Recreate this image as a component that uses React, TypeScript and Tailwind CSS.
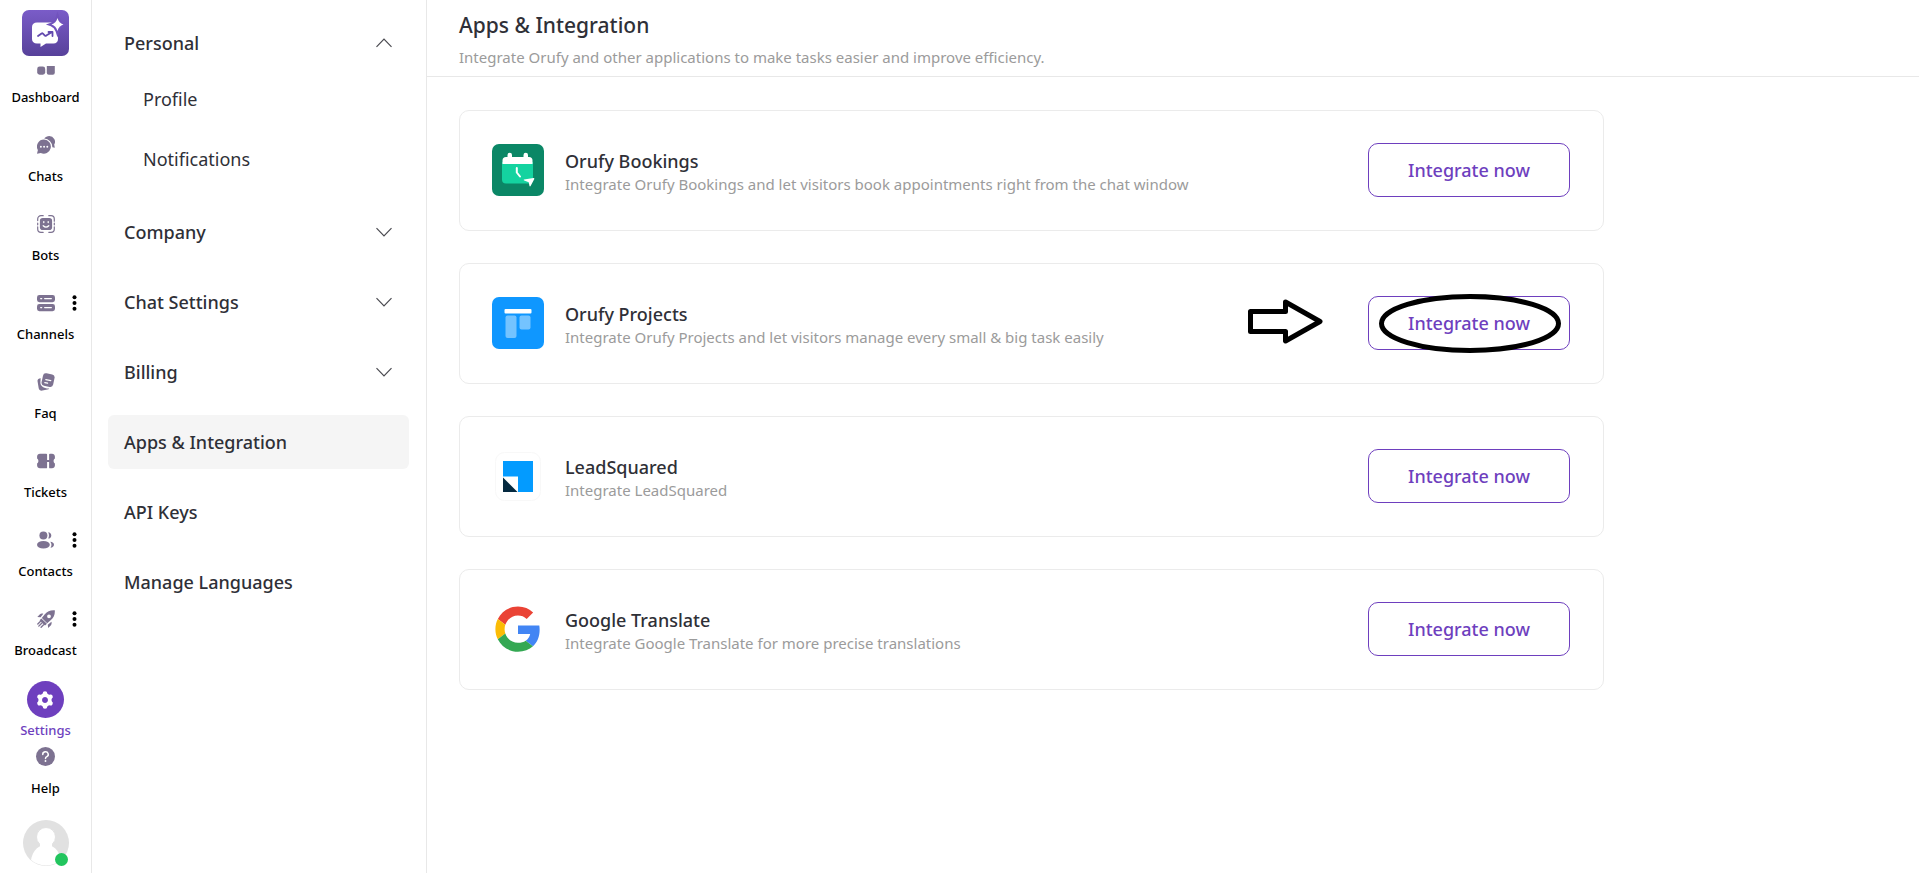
import type { ReactNode } from "react";

const RAIL = "#7d7291";

function Glyph({ children }: { children: ReactNode }) {
  return (
    <svg viewBox="0 0 18 18" className="size-[18px] shrink-0" fill={RAIL} aria-hidden="true">
      {children}
    </svg>
  );
}

const DashboardIcon = () => (
  <Glyph>
    <rect x="0.2" y="0" width="8" height="6.5" rx="2" />
    <rect x="9.8" y="0" width="8" height="6" rx="2" />
    <rect x="0.2" y="9.6" width="8" height="8.1" rx="2.4" />
    <rect x="9.8" y="7.5" width="8" height="10.2" rx="2" />
  </Glyph>
);

const ChatsIcon = () => (
  <Glyph>
    <path d="M7.2 2.6C8.4.9 10.3 0 12.3 0a5.7 5.7 0 0 1 4.9 8.6l.6 3.1-2.4-.4A8.7 8.7 0 0 0 7.2 2.6z" />
    <path
      fillRule="evenodd"
      d="M7 3.6a7 7 0 1 1-3.2 13.3L0 17.8l.9-3.7A7 7 0 0 1 7 3.6zM3.9 9.8a.95.95 0 1 0 0 1.9.95.95 0 0 0 0-1.9zm3.2 0a.95.95 0 1 0 0 1.9.95.95 0 0 0 0-1.9zm3.2 0a.95.95 0 1 0 0 1.9.95.95 0 0 0 0-1.9z"
    />
  </Glyph>
);

const BotsIcon = () => (
  <Glyph>
    <g fill="none" stroke={RAIL} strokeWidth="1.2" strokeLinecap="round">
      <path d="M.7 5.6V4A3.3 3.3 0 0 1 4 .7h2.200M11.800.7H14A3.3 3.3 0 0 1 17.300 4v2.200M17.300 11.800V14a3.3 3.3 0 0 1-3.3 3.300h-2.200M6.200 17.300H4A3.3 3.3 0 0 1 .7 14v-2.200" />
      <path d="M.7 8.200v1.600M17.300 8.200v1.600" />
    </g>
    <rect x="2.900" y="2.900" width="12.200" height="12.200" rx="2.800" />
    <g fill="none" stroke="#fff" strokeWidth="1.3" strokeLinecap="round">
      <path d="M6.8 6.600v1M11.200 6.600v1M6.200 10.800c1.600 1.500 4 1.500 5.600 0" />
    </g>
  </Glyph>
);

const ChannelsIcon = () => (
  <Glyph>
    <rect x="0" y="1" width="18" height="7.2" rx="2.4" />
    <rect x="0" y="10" width="18" height="7.2" rx="2.4" />
    <g stroke="#fff" strokeWidth="1.1" strokeLinecap="round">
      <path d="M3.6 4.6h1.2M7.6 4.6h6.8M3.6 13.6h1.2M7.6 13.6h6.8" />
    </g>
  </Glyph>
);

const FaqIcon = () => (
  <Glyph>
    <path d="M3.7 5.2C2 5.4.2 6.200.5 8l1.200 7.200C2 17 3.600 18 5.400 17.600l5-1.100c.9-.2 1.500-.6 1.900-1.100-5.300.2-9.200-2.400-8.900-6.500z" />
    <rect x="5.200" y="0.800" width="11.800" height="12.600" rx="3" transform="rotate(12 11 7)" />
    <path d="M8.800 6.600l5 1M7.800 9.700l2.800.5" stroke="#fff" strokeWidth="1.200" strokeLinecap="round" />
  </Glyph>
);

const TicketsIcon = () => (
  <Glyph>
    <path d="M3 1.700h6.200c.5 0 .9.400.9.900v12.800c0 .5-.4.900-.9.900H3c-1.700 0-2.900-1.200-2.900-2.800v-1.900c.8-.6 1.300-1.500 1.300-2.600S.900 7 .1 6.400V4.500C.1 2.900 1.300 1.700 3 1.700z" />
    <path d="M13 1.700h2c1.700 0 2.900 1.200 2.900 2.800v1.900c-.8.600-1.300 1.500-1.300 2.600s.5 2 1.300 2.600v1.900c0 1.600-1.200 2.800-2.900 2.800h-2c-.5 0-.9-.4-.9-.9V2.600c0-.5.4-.9.900-.9z" />
    <rect x="9" y="8" width="4" height="2" />
  </Glyph>
);

const ContactsIcon = () => (
  <Glyph>
    <circle cx="6.400" cy="4.400" r="4" />
    <ellipse cx="6.400" cy="13.800" rx="6.400" ry="3.800" />
    <path d="M11.200 1.200c1.800.1 3.100 1.400 3.100 3.200s-1.300 3.200-3.100 3.200c1-2 1-4.400 0-6.400z" />
    <path d="M13.300 10.800c2.300.2 3.700 1.300 3.700 2.900s-1.400 2.700-3.500 3c1.400-1.800 1.300-4.200-.2-5.900z" />
  </Glyph>
);

const BroadcastIcon = () => (
  <Glyph>
    <path
      fillRule="evenodd"
      d="M17.800.3c.3 4.400-.9 7.200-3.900 9.800l-3.700 3.200-5.400-5.200 3-3.800C10.400 1.300 13.400 0 17.800.3zM12 4.400a1.900 1.900 0 1 0 0 3.800 1.900 1.900 0 0 0 0-3.800z"
    />
    <path d="M6.300 3.700 3.600 7.200.3 6.900l2.400-2.500c.9-.9 2.200-1.200 3.600-.7zM14.400 11.800l-3.600 2.900.3 3.200 2.600-2.400c.9-.9 1.200-2.200.7-3.700z" />
    <path d="M4.400 9.400 9 13.800l-1 .9-4.500-4.400zM3.300 11.500.8 14M4.900 13l-3.100 3.100M6.600 14.700l-2.500 2.500" stroke={RAIL} strokeWidth="1.300" strokeLinecap="round" />
  </Glyph>
);

const HelpIcon = () => (
  <svg viewBox="0 0 18 18" className="size-[19px] shrink-0" aria-hidden="true">
    <circle cx="9" cy="9" r="9" fill={RAIL} />
    <path d="M6.400 7.100a2.600 2.500 0 1 1 3.900 2.100C9.400 9.700 9 10.100 9 11" fill="none" stroke="#fff" strokeWidth="1.400" strokeLinecap="round" />
    <circle cx="9" cy="13.200" r="0.900" fill="#fff" />
  </svg>
);

const Logo = () => (
  <svg viewBox="0 0 47 46" className="h-[46px] w-[47px]" role="img" aria-label="Orufy">
    <defs>
      <linearGradient id="logo" x1="0" y1="0" x2="0" y2="1">
        <stop offset="0" stopColor="#7a5cc8" />
        <stop offset="1" stopColor="#57419a" />
      </linearGradient>
    </defs>
    <rect width="47" height="46" rx="7" fill="url(#logo)" />
    <path d="M15 12.500h16.500c2.800 0 4.500 1.700 4.500 4.500v12c0 2.800-1.700 4.500-4.500 4.500H24L18.500 37v-3.500H15c-3 0-5-1.700-5-4.500V17c0-2.800 2-4.500 5-4.500z" fill="#fff" />
    <path d="M16 26l3.600-2.600c.5-.3.900-.2 1.300.2l2 2c.5.4.9.400 1.400 0L30 22M26.500 22H30.500v4" fill="none" stroke="#6249ae" strokeWidth="1.800" strokeLinecap="round" strokeLinejoin="round" />
    <path d="M35.500 8c1.200 3.700 2.600 5.200 6 6.500-3.400 1.300-4.800 2.800-6 6.500-1.200-3.700-2.600-5.200-6-6.500 3.400-1.300 4.800-2.800 6-6.500z" fill="#fff" stroke="#7153bd" strokeWidth="4" paintOrder="stroke" />
  </svg>
);

const railItems: { label: string; icon: ReactNode; more?: boolean }[] = [
  { label: "Dashboard", icon: <DashboardIcon /> },
  { label: "Chats", icon: <ChatsIcon /> },
  { label: "Bots", icon: <BotsIcon /> },
  { label: "Channels", icon: <ChannelsIcon />, more: true },
  { label: "Faq", icon: <FaqIcon /> },
  { label: "Tickets", icon: <TicketsIcon /> },
  { label: "Contacts", icon: <ContactsIcon />, more: true },
  { label: "Broadcast", icon: <BroadcastIcon />, more: true },
];

function Rail() {
  return (
    <aside className="flex w-[92px] shrink-0 flex-col items-center border-r border-[#e8e8e8] pt-[10px] text-[13px] leading-5 font-medium text-black">
      <a href="#home" className="mb-[10px] block">
        <Logo />
      </a>
      <nav className="w-full overflow-hidden" aria-label="Main">
        <ul className="-mt-[9px] flex flex-col gap-[29px]">
          {railItems.map((item) => (
            <li key={item.label} className="relative">
              <a href={"#" + item.label.toLowerCase()} className="flex flex-col items-center gap-3">
                {item.icon}
                <span>{item.label}</span>
              </a>
              {item.more && (
                <button type="button" aria-label={item.label + " options"} className="absolute top-px right-3">
                  <svg viewBox="0 0 8 16" className="h-4 w-2" fill="#000">
                    <circle cx="3.500" cy="2.200" r="2" />
                    <circle cx="3.500" cy="8" r="2" />
                    <circle cx="3.500" cy="13.800" r="2" />
                  </svg>
                </button>
              )}
            </li>
          ))}
        </ul>
      </nav>
      <a href="#settings" className="mt-[21px] flex flex-col items-center gap-0.5 text-[#6e3fbe]">
        <span className="flex size-[37px] items-center justify-center rounded-full bg-[#6e3fbe]">
          <svg viewBox="0 0 18 18" className="size-[18px]" aria-hidden="true">
            <circle cx="9" cy="9" r="4.700" fill="none" stroke="#fff" strokeWidth="4" />
            <g stroke="#fff" strokeWidth="4.600" strokeLinecap="round">
              <path d="M9 2.600v1M9 14.400v1M3.500 5.800l.8.500M13.700 11.700l.8.500M3.500 12.200l.8-.5M13.700 6.300l.8-.5" />
            </g>
            <circle cx="9" cy="9" r="2.700" fill="#6e3fbe" />
          </svg>
        </span>
        <span>Settings</span>
      </a>
      <a href="#help" className="mt-[7px] flex flex-col items-center gap-3">
        <HelpIcon />
        <span>Help</span>
      </a>
      <button type="button" aria-label="Account" className="relative mt-[22px]">
        <svg viewBox="0 0 46 46" className="size-[46px]" aria-hidden="true">
          <defs>
            <clipPath id="avatar">
              <circle cx="23" cy="23" r="22.500" />
            </clipPath>
          </defs>
          <circle cx="23" cy="23" r="23" fill="#e1e1e1" />
          <g clipPath="url(#avatar)" fill="#fff">
            <path d="M7.500 46c0-13 6-21 15.500-21s15.500 8 15.500 21z" />
            <circle cx="23" cy="17" r="9.500" fill="#fff" stroke="#e1e1e1" strokeWidth="1" />
            <path d="M17 23h12v4H17z" />
          </g>
        </svg>
        <span className="absolute right-px bottom-0 size-[13px] rounded-full bg-[#22c55e]" />
      </button>
    </aside>
  );
}

function Chevron({ up = false }: { up?: boolean }) {
  return (
    <svg viewBox="0 0 16 10" className="h-[10px] w-4" fill="none" stroke="#4a4a50" strokeWidth="1.200" aria-hidden="true">
      <path d={up ? "M.5 8.800 8 1.200l7.500 7.600" : "M.5 1.200 8 8.800l7.500-7.600"} />
    </svg>
  );
}

const sections = [
  { label: "Company", expandable: true },
  { label: "Chat Settings", expandable: true },
  { label: "Billing", expandable: true },
  { label: "Apps & Integration", active: true },
  { label: "API Keys" },
  { label: "Manage Languages" },
];

function SettingsMenu() {
  const row = "flex h-[54px] w-full items-center justify-between rounded-md pr-[17px] pl-4 text-left";
  return (
    <aside className="w-[335px] shrink-0 border-r border-[#e8e8e8] px-4 pt-4 pr-[17px] text-[18px] font-medium text-[#2f3037]">
      <button type="button" aria-expanded="true" className={row}>
        Personal
        <Chevron up />
      </button>
      <ul className="mt-[7px] mb-6 flex flex-col gap-4 pl-[35px] font-normal">
        <li className="flex h-11 items-center">
          <a href="#profile">Profile</a>
        </li>
        <li className="flex h-11 items-center">
          <a href="#notifications">Notifications</a>
        </li>
      </ul>
      <ul className="flex flex-col gap-4">
        {sections.map((s) => (
          <li key={s.label}>
            {s.expandable ? (
              <button type="button" aria-expanded="false" className={row}>
                {s.label}
                <Chevron />
              </button>
            ) : (
              <a href="#section" className={row + (s.active ? " bg-[#f5f5f5]" : "")}>
                {s.label}
              </a>
            )}
          </li>
        ))}
      </ul>
    </aside>
  );
}

const BookingsLogo = () => (
  <svg viewBox="0 0 52 52" className="size-[52px]" aria-hidden="true">
    <rect width="52" height="52" rx="7" fill="#0b8766" />
    <path d="M10 18h31v17.500a4 4 0 0 1-4 4H14a4 4 0 0 1-4-4z" fill="#14d3a0" />
    <path d="M14 13h1.500v-2a2 2 0 0 1 4.500 0v2h11.500v-2a2 2 0 0 1 4.500 0v2h1a3.500 3.500 0 0 1 3.500 3.500V20H10.500v-3.500A3.500 3.500 0 0 1 14 13z" fill="#fff" />
    <path d="M24.800 24v4.500l3.200 4" fill="none" stroke="#fff" strokeWidth="2" strokeLinecap="round" strokeLinejoin="round" />
    <path d="M32 35.500l9.500-1.500c.7 0 1 .5.700 1.200L38.600 42c-.3.600-1 .5-1.100-.1l-.8-3.600-4.500-1.700c-.6-.3-.7-.9-.2-1.100z" fill="#fff" />
  </svg>
);

const ProjectsLogo = () => (
  <svg viewBox="0 0 52 52" className="size-[52px]" aria-hidden="true">
    <rect width="52" height="52" rx="7" fill="#0f97ff" />
    <rect x="12.500" y="12" width="27" height="4.500" rx="1" fill="#fff" />
    <rect x="13.500" y="18.500" width="11" height="22.500" rx="2" fill="#74c3ff" />
    <rect x="27.500" y="18.500" width="11" height="14" rx="2" fill="#74c3ff" />
  </svg>
);

const LeadSquaredLogo = () => (
  <svg viewBox="0 0 52 52" className="size-[52px]" aria-hidden="true">
    <rect x="3.500" y="2.500" width="45" height="48" rx="9" fill="#fff" stroke="#f8f8f8" />
    <path d="M11 11h30v31H26V26.500H11z" fill="#039bff" />
    <path d="M11 27.500 25.500 42H11z" fill="#04293f" />
  </svg>
);

const GoogleLogo = () => (
  <svg viewBox="-3.600 -3.800 55.200 55.200" className="size-[52px]" aria-hidden="true">
    <path fill="#EA4335" d="M24 9.500c3.540 0 6.710 1.220 9.210 3.600l6.850-6.850C35.900 2.380 30.470 0 24 0 14.620 0 6.510 5.380 2.560 13.220l7.980 6.190C12.430 13.720 17.740 9.500 24 9.500z" />
    <path fill="#4285F4" d="M46.980 24.550c0-1.570-.15-3.090-.38-4.550H24v9.020h12.940c-.58 2.960-2.260 5.480-4.780 7.180l7.730 6c4.510-4.180 7.090-10.360 7.090-17.650z" />
    <path fill="#FBBC05" d="M10.530 28.590c-.48-1.450-.76-2.990-.76-4.590s.27-3.140.76-4.590l-7.980-6.190C.92 16.460 0 20.120 0 24c0 3.880.92 7.540 2.560 10.780l7.970-6.190z" />
    <path fill="#34A853" d="M24 48c6.480 0 11.930-2.130 15.890-5.810l-7.730-6c-2.150 1.450-4.920 2.300-8.160 2.300-6.260 0-11.570-4.220-13.470-9.910l-7.980 6.190C6.510 42.620 14.620 48 24 48z" />
  </svg>
);

const apps: { name: string; text: string; logo: ReactNode; marked?: boolean }[] = [
  {
    name: "Orufy Bookings",
    text: "Integrate Orufy Bookings and let visitors book appointments right from the chat window",
    logo: <BookingsLogo />,
  },
  {
    name: "Orufy Projects",
    text: "Integrate Orufy Projects and let visitors manage every small & big task easily",
    logo: <ProjectsLogo />,
    marked: true,
  },
  { name: "LeadSquared", text: "Integrate LeadSquared", logo: <LeadSquaredLogo /> },
  { name: "Google Translate", text: "Integrate Google Translate for more precise translations", logo: <GoogleLogo /> },
];

function Marks() {
  return (
    <>
      <svg viewBox="0 0 76 46" className="pointer-events-none absolute top-[3px] -left-[120px] h-[46px] w-[76px]" aria-hidden="true">
        <path d="M2.500 12.500h35V3L72 22.500 37.500 42V32.500h-35z" fill="none" stroke="#000" strokeWidth="5" strokeLinejoin="round" />
      </svg>
      <svg viewBox="0 0 182 59" className="pointer-events-none absolute -top-0.5 left-[11px] h-[59px] w-[182px]" aria-hidden="true">
        <ellipse cx="91" cy="29.500" rx="88.500" ry="27" fill="none" stroke="#000" strokeWidth="5" />
      </svg>
    </>
  );
}

export default function App() {
  return (
    <div className="flex min-h-screen bg-white font-['Segoe_UI','Noto_Sans',sans-serif]">
      <Rail />
      <SettingsMenu />
      <main className="min-w-0 flex-1">
        <header className="border-b border-[#e8e8e8] px-8 pt-2.5 pb-1.5">
          <h1 className="text-[21px] leading-[30px] font-medium text-[#2f3037]">Apps &amp; Integration</h1>
          <p className="mt-1 text-[15px] leading-[26px] text-[#9b9b9b]">
            Integrate Orufy and other applications to make tasks easier and improve efficiency.
          </p>
        </header>
        <ul className="flex max-w-[1209px] flex-col gap-8 px-8 pt-[33px] pb-8">
          {apps.map((app) => (
            <li key={app.name} className="flex h-[121px] items-center rounded-[10px] border border-[#ebebeb] pr-[33px] pb-0.5 pl-8">
              {app.logo}
              <div className="ml-[21px] min-w-0 flex-1 pt-1">
                <h2 className="text-[18px] leading-6 font-medium text-[#2f3037]">{app.name}</h2>
                <p className="text-[15px] leading-[22px] text-[#9b9b9b]">{app.text}</p>
              </div>
              <div className="relative shrink-0">
                <button
                  type="button"
                  className="block h-[54px] w-[202px] rounded-[10px] border border-[#6e3fbe] pt-0.5 text-[18px] font-medium text-[#6e3fbe]"
                >
                  Integrate now
                </button>
                {app.marked && <Marks />}
              </div>
            </li>
          ))}
        </ul>
      </main>
    </div>
  );
}
